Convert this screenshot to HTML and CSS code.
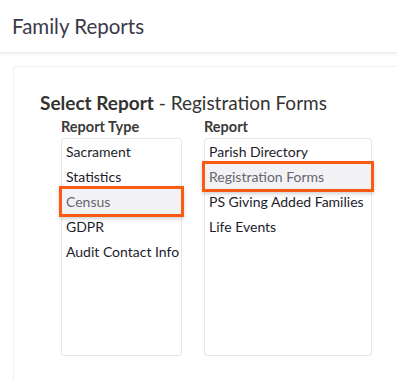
FILE: index.html
```html
<!DOCTYPE html>
<html lang="en">
<head>
    <meta charset="UTF-8">
    <title>Family Reports</title>
    <link rel="stylesheet" href="styles.css">
</head>
<body>
    <div class="header">
        <h1>Family Reports</h1>
    </div>
    <div class="main">
        <div class="card">
            <h2><b>Select Report</b> - Registration Forms</h2>
            <div class="pickers">
                <div class="picker type">
                    <label>Report Type</label>
                    <ul class="list">
                        <li>Sacrament</li>
                        <li>Statistics</li>
                        <li class="selected">Census</li>
                        <li>GDPR</li>
                        <li>Audit Contact Info</li>
                    </ul>
                </div>
                <div class="picker report">
                    <label>Report</label>
                    <ul class="list">
                        <li>Parish Directory</li>
                        <li class="selected">Registration Forms</li>
                        <li>PS Giving Added Families</li>
                        <li>Life Events</li>
                    </ul>
                </div>
            </div>
        </div>
    </div>
</body>
</html>
```

FILE: styles.css
```css
body {margin:0; background:#fff; font-family:Lato, "Open Sans", sans-serif; color:#222;}
.header {height:52px; padding-left:12px; border-bottom:1px solid #ececec; box-shadow:0 2px 3px rgba(0,0,0,0.05);}
.header h1 {margin:0; font-weight:400; font-size:20.5px; line-height:52px; color:#3a3a48;}
.main {padding:13px 0 0 13px;}
.card {border:1px solid #f0f0f0; border-right:none; border-bottom:none; border-radius:3px 0 0 0; padding:24px 0 0 26px; height:290px;}
.card h2 {margin:0; font-size:19px; font-weight:400; color:#333; line-height:23px;}
.card h2 b {font-weight:700;}
.pickers {display:flex; gap:22px; margin-left:21px; margin-top:4px;}
.picker label {display:block; font-size:14.5px; font-weight:700; color:#3a3a3a; line-height:17px; margin-bottom:3px;}
.type .list {width:119px;}
.report .list {width:166px;}
.list {list-style:none; margin:0; padding:0; height:216px; border:1px solid #e6e6e6; border-radius:3px;}
.list li {height:25px; line-height:25px; font-size:14px; padding-left:4px; color:#1c1c2c; white-space:nowrap;}
.list li.selected {background:#f2f2f5; color:#666670; outline:3px solid #fa5a12; box-shadow:0 2px 4px 3px rgba(0,0,0,0.18);}
```
